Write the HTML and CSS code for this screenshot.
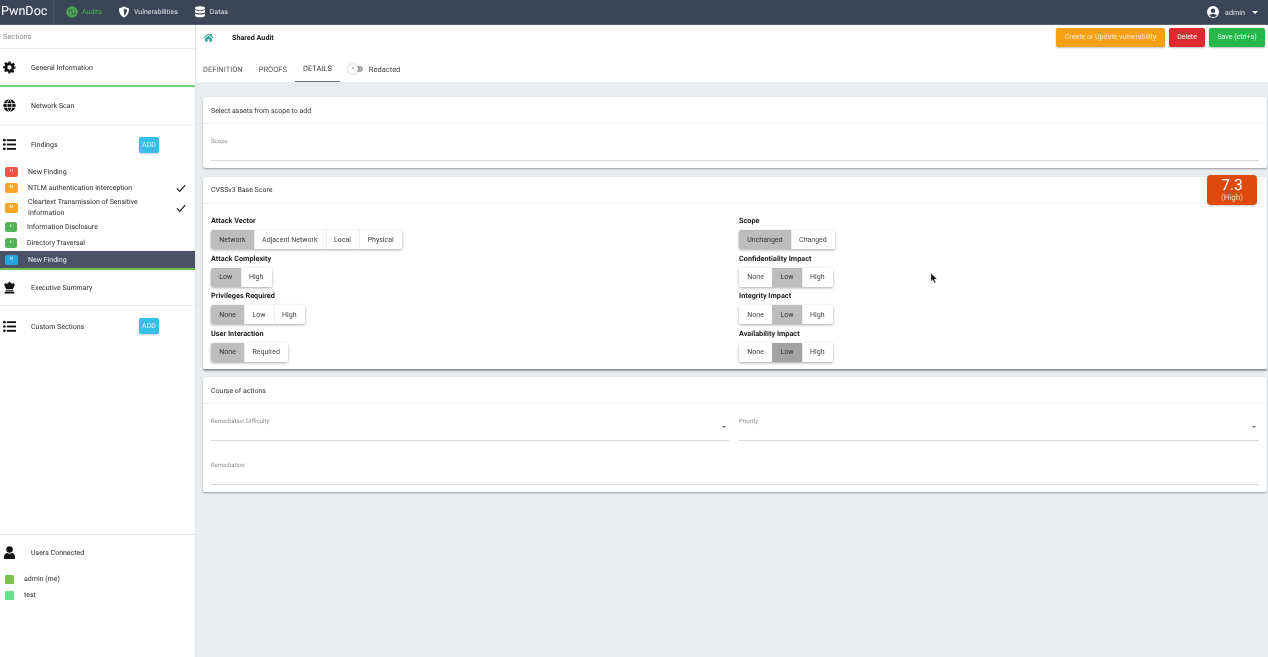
FILE: index.html
```html
<!DOCTYPE html>
<html lang="en">
<head>
<meta charset="utf-8">
<title>PwnDoc</title>
<link rel="stylesheet" href="styles.css">
</head>
<body>
<header class="topbar">
  <div class="brand">PwnDoc</div>
  <nav class="topnav">
    <a class="topnav-item active">
      <svg class="nav-icon" viewBox="0 0 24 24"><circle cx="12" cy="12" r="11.500" fill="#4caf50"/><path d="M12 3v19M7 5c-2 4-2 10 0 14M17 5c2 4 2 10 0 14M3 9c3 1 6 1 9 0M12 15c3 1 6 1 9-1" stroke="#3b4558" stroke-width="1.3" fill="none"/></svg>
      <span>Audits</span>
    </a>
    <a class="topnav-item">
      <svg class="nav-icon" viewBox="0 0 24 24"><path d="M12 1l10 4c0 8-3 15-10 18C5 20 2 13 2 5z" fill="#fff"/><path d="M12 5l6 2.400c0 5-2 9.500-6 11.600z" fill="#3b4558"/></svg>
      <span>Vulnerabilities</span>
    </a>
    <a class="topnav-item">
      <svg class="nav-icon" viewBox="0 0 24 24"><g fill="#fff"><ellipse cx="12" cy="4.500" rx="10" ry="3.800"/><path d="M2 7.500c2 3.500 18 3.500 20 0v4.500c-2 3.800-18 3.800-20 0z"/><path d="M2 14.500c2 3.500 18 3.500 20 0v5c-2 4-18 4-20 0z"/></g></svg>
      <span>Datas</span>
    </a>
  </nav>
  <div class="account">
    <svg class="account-icon" viewBox="0 0 24 24"><circle cx="12" cy="12" r="12" fill="#fff"/><circle cx="12" cy="9.500" r="4.500" fill="#3b4558"/><path d="M4.500 19c2-4 13-4 15 0-3.500 4-11.500 4-15 0z" fill="#3b4558"/></svg>
    <span>admin</span>
    <i class="caret"></i>
  </div>
</header>

<div class="app">
  <aside class="sidebar">
    <div class="side-title">Sections</div>

    <div class="side-row general">
      <svg class="side-icon" viewBox="0 0 24 24"><path fill="#111" fill-rule="evenodd" d="M10 1h4l.6 3.200 1.900.8 2.700-1.800 2.800 2.800-1.800 2.700.8 1.900L23 10v4l-3.200.6-.8 1.900 1.800 2.700-2.800 2.800-2.700-1.800-1.900.8L14 23h-4l-.6-3.200-1.900-.8-2.700 1.800-2.800-2.800 1.800-2.700-.8-1.900L0 14v-4l3.200-.6.8-1.900L2.200 4.800 5 2l2.700 1.800 1.900-.8zM12 8a4 4 0 100 8 4 4 0 000-8z"/></svg>
      <span>General Information</span>
    </div>
    <div class="side-row network">
      <svg class="side-icon" viewBox="0 0 24 24"><circle cx="12" cy="12" r="11.500" fill="#111"/><path d="M0 8.500h24M0 15.500h24M12 .5c-6 6-6 17 0 23M12 .5c6 6 6 17 0 23" stroke="#fff" stroke-width="1.500" fill="none"/></svg>
      <span>Network Scan</span>
    </div>
    <div class="side-row findings">
      <svg class="side-icon" viewBox="0 0 24 24"><g fill="#111"><circle cx="2.500" cy="4" r="2.500"/><circle cx="2.500" cy="12" r="2.500"/><circle cx="2.500" cy="20" r="2.500"/><rect x="7" y="2.300" width="17" height="3.400"/><rect x="7" y="10.300" width="17" height="3.400"/><rect x="7" y="18.300" width="17" height="3.400"/></g></svg>
      <span>Findings</span>
      <button class="add-btn">ADD</button>
    </div>

    <ul class="finding-list">
      <li class="finding f-a"><b class="sev sev-red">H</b><span>New Finding</span></li>
      <li class="finding f-b"><b class="sev sev-orange">M</b><span>NTLM authentication interception</span>
        <svg class="check" viewBox="0 0 24 24"><path d="M2 13l7 7L22 5" stroke="#222" stroke-width="3" fill="none"/></svg></li>
      <li class="finding f-c"><b class="sev sev-orange">M</b><span>Cleartext Transmission of Sensitive Information</span>
        <svg class="check" viewBox="0 0 24 24"><path d="M2 13l7 7L22 5" stroke="#222" stroke-width="3" fill="none"/></svg></li>
      <li class="finding f-d"><b class="sev sev-green">L</b><span>Information Disclosure</span></li>
      <li class="finding f-d"><b class="sev sev-green">L</b><span>Directory Traversal</span></li>
      <li class="finding selected"><b class="sev sev-blue">N</b><span>New Finding</span></li>
    </ul>

    <div class="side-row executive">
      <svg class="side-icon" viewBox="0 0 24 24"><path fill="#111" d="M12 1l1.500 2 2-.5-.5 2.500 5-1 2 3-4 8H6L2 7l2-3 5 1-.5-2.500 2 .5zM5 17h14v2H5zM3 20h18v3H3z"/></svg>
      <span>Executive Summary</span>
    </div>
    <div class="side-row custom">
      <svg class="side-icon" viewBox="0 0 24 24"><g fill="#111"><circle cx="2.500" cy="4" r="2.500"/><circle cx="2.500" cy="12" r="2.500"/><circle cx="2.500" cy="20" r="2.500"/><rect x="7" y="2.300" width="17" height="3.400"/><rect x="7" y="10.300" width="17" height="3.400"/><rect x="7" y="18.300" width="17" height="3.400"/></g></svg>
      <span>Custom Sections</span>
      <button class="add-btn">ADD</button>
    </div>

    <div class="users">
      <div class="side-row users-head">
        <svg class="side-icon" viewBox="0 0 24 24"><circle cx="12" cy="6.500" r="6" fill="#111"/><path d="M2 24v-5c0-4 4-6 6-6 2 1.500 6 1.500 8 0 2 0 6 2 6 6v5z" fill="#111"/></svg>
        <span>Users Connected</span>
      </div>
      <div class="user"><i class="dot dot-a"></i><span>admin (me)</span></div>
      <div class="user"><i class="dot dot-b"></i><span>test</span></div>
    </div>
  </aside>

  <main class="content">
    <div class="head">
      <div class="titlebar">
        <svg class="home" viewBox="0 0 24 24"><path fill="#26a69a" d="M12 3l4 3.400V4h3v5l4 3.500-1.500 1.500L12 6 2.500 14 1 12.500zM4.500 14.500L12 8.300l7.500 6.200V21h-5.500v-5h-4v5H4.500z"/></svg>
        <span class="audit-name">Shared Audit</span>
        <div class="actions">
          <button class="btn btn-orange">Create or Update vulnerability</button>
          <button class="btn btn-red">Delete</button>
          <button class="btn btn-green">Save (ctrl+s)</button>
        </div>
      </div>
      <div class="tabs">
        <a class="tab">DEFINITION</a>
        <a class="tab">PROOFS</a>
        <a class="tab current">DETAILS</a>
        <div class="toggle"><i class="track"></i><i class="thumb">×</i></div>
        <span class="toggle-label">Redacted</span>
      </div>
    </div>

    <section class="card card-scope">
      <h2 class="card-title">Select assets from scope to add</h2>
      <div class="card-body">
        <div class="field field-scope"><label>Scope</label></div>
      </div>
    </section>

    <section class="card card-cvss">
      <h2 class="card-title">CVSSv3 Base Score</h2>
      <div class="score"><strong>7.3</strong><small>(High)</small></div>
      <div class="cvss-grid">
        <div class="metric"><h3>Attack Vector</h3><div class="group"><button class="on">Network</button><button>Adjacent Network</button><button>Local</button><button>Physical</button></div></div>
        <div class="metric"><h3>Scope</h3><div class="group"><button class="on">Unchanged</button><button>Changed</button></div></div>
        <div class="metric"><h3>Attack Complexity</h3><div class="group"><button class="on">Low</button><button>High</button></div></div>
        <div class="metric"><h3>Confidentiality Impact</h3><div class="group"><button>None</button><button class="on">Low</button><button>High</button></div></div>
        <div class="metric"><h3>Privileges Required</h3><div class="group"><button class="on">None</button><button>Low</button><button>High</button></div></div>
        <div class="metric"><h3>Integrity Impact</h3><div class="group"><button>None</button><button class="on">Low</button><button>High</button></div></div>
        <div class="metric"><h3>User Interaction</h3><div class="group"><button class="on">None</button><button>Required</button></div></div>
        <div class="metric"><h3>Availability Impact</h3><div class="group"><button>None</button><button class="on hover">Low</button><button>High</button></div></div>
      </div>
    </section>

    <section class="card card-course">
      <h2 class="card-title">Course of actions</h2>
      <div class="card-body">
        <div class="two-col">
          <div class="field field-select"><label>Remediation Difficulty</label><i class="select-caret"></i></div>
          <div class="field field-select"><label>Priority</label><i class="select-caret"></i></div>
        </div>
        <div class="field field-rem"><label>Remediation</label></div>
      </div>
    </section>
  </main>
</div>
<svg class="cursor" viewBox="0 0 10 14"><path d="M1 0v11l2.600-2.400L5.500 13l1.800-.8-1.900-4.200H9z" fill="#111" stroke="#fff" stroke-width=".6"/></svg>
</body>
</html>
```
FILE: styles.css
```css
* { box-sizing: border-box; }
html, body { margin: 0; height: 100%; }
body {
  font-family: Roboto, "Liberation Sans", sans-serif;
  font-size: 7px;
  color: #2a2a2a;
  background: #e9edf0;
  overflow: hidden;
  position: relative;
  text-rendering: geometricPrecision;
}
.topbar, .app { filter: blur(.3px); will-change: transform; }
.topbar {
  height: 25px;
  background: #3b4558;
  border-bottom: 1px solid #596273;
  display: flex;
  align-items: center;
  color: #e8eaee;
}
.brand {
  width: 54px;
  height: 24px;
  line-height: 24px;
  padding-left: 1px;
  font-size: 12.6px;
  color: #fff;
  border-right: 1px solid #4a5467;
}
.topnav { display: flex; margin-left: 12px; }
.topnav-item { display: flex; align-items: center; gap: 4px; font-size: 7px; color: #dfe2e7; margin-right: 16px; }
.topnav-item.active { color: #4caf50; }
.nav-icon { width: 12px; height: 14px; }
.account { margin-left: auto; display: flex; align-items: center; padding-right: 10px; font-size: 7.200px; color: #dfe2e7; }
.account-icon { width: 12px; height: 12px; margin-right: 6px; }
.caret { margin-left: 7px; border: 3px solid transparent; border-top: 3px solid #fff; border-bottom: 0; }

.app { display: flex; height: 632px; }
.sidebar {
  width: 196px;
  flex: none;
  background: #fff;
  border-right: 1px solid #e2e5e8;
  display: flex;
  flex-direction: column;
}
.side-title { height: 24px; line-height: 23px; padding-left: 3px; color: #888; font-size: 7.400px; border-bottom: 1px solid #eee; }
.side-row { display: flex; align-items: center; font-size: 7px; padding-left: 3px; position: relative; }
.side-row span { padding-top: 1px; }
.side-icon { width: 13px; height: 13px; margin-right: 15px; flex: none; }
.general { height: 38px; border-bottom: 2px solid #71d17c; }
.network { height: 38px; border-bottom: 1px solid #eee; }
.findings { height: 39px; padding-bottom: 1px; }
.executive { height: 36px; border-bottom: 1px solid #eee; }
.custom { height: 40px; }
.add-btn {
  position: absolute;
  left: 139px;
  top: 50%;
  margin-top: -8px;
  width: 20px;
  height: 16px;
  padding: 0;
  border: 0;
  border-radius: 2px;
  background: #33c1e8;
  color: #d9f3fb;
  font: inherit;
  font-size: 7px;
  box-shadow: 0 1px 2px rgba(0,0,0,.2);
}
.finding-list { list-style: none; margin: 0; padding: 0; }
.finding { display: flex; align-items: center; height: 16px; font-size: 7px; position: relative; padding-left: 5px; }
.finding span { margin-left: 10px; }
.f-c { height: 23px; line-height: 10.500px; }
.f-c span { width: 125px; }
.f-d .sev { width: 12px; }
.f-d span { margin-left: 10px; }
.selected { background: #4a5366; color: #eef0f3; border-bottom: 2px solid #6cc24a; height: 19px; }
.sev {
  width: 13px;
  height: 10px;
  border-radius: 2px;
  flex: none;
  color: #fff;
  opacity: .95;
  font-size: 4.500px;
  font-weight: 400;
  text-align: center;
  line-height: 10px;
}
.sev-red { background: #ef4a3f; }
.sev-orange { background: #f9a11b; }
.sev-green { background: #4caf50; }
.sev-blue { background: #29a9e8; }
.check { position: absolute; left: 176px; top: 50%; margin-top: -5px; width: 10px; height: 10px; }
.users { margin-top: auto; border-top: 1px solid #e6e6e6; padding-bottom: 54px; }
.users-head { height: 35px; margin-bottom: 1px; }
.user { display: flex; align-items: center; height: 16px; padding-left: 5px; font-size: 7px; }
.dot { width: 9px; height: 9px; border-radius: 1px; margin-right: 10px; }
.dot-a { background: #7cc24e; }
.dot-b { background: #66e08a; }

.content { flex: 1; min-width: 0; display: flex; flex-direction: column; }
.head { background: #fff; height: 57px; margin-bottom: 15px; }
.titlebar { height: 24px; display: flex; align-items: center; padding-left: 7px; }
.home { width: 11px; height: 11px; margin-right: 18px; }
.audit-name { font-weight: 700; font-size: 7.200px; color: #222; }
.actions { margin-left: auto; display: flex; gap: 4px; padding-right: 3px; }
.btn {
  height: 19px;
  padding: 0;
  border: 0;
  border-radius: 2px;
  color: #f3e8d2;
  font: inherit;
  font-size: 7px;
  box-shadow: 0 1px 2px rgba(0,0,0,.25);
}
.btn-orange { width: 109px; background: #f9a012; }
.btn-red { width: 36px; background: #dc2a2f; color: #fff; }
.btn-green { width: 56px; background: #27b84a; color: #e8f8ec; }
.tabs { height: 26px; margin: 7px 0 0 -1px; display: flex; align-items: stretch; }
.tab { display: flex; align-items: center; padding: 0 8px; font-size: 7.500px; color: #555; }
.tab.current { color: #333; border-bottom: 1px solid #6b7280; }
.toggle { position: relative; width: 15px; margin-left: 8px; align-self: center; height: 8px; }
.track { position: absolute; left: 3px; right: 0; top: 1px; bottom: 1px; background: #aaa; border-radius: 3px; }
.thumb {
  position: absolute; left: 0; top: -1px; width: 10px; height: 10px; border-radius: 50%;
  background: #fff; box-shadow: 0 0 2px rgba(0,0,0,.4); font-style: normal; font-size: 6px; line-height: 10px; text-align: center; color: #999;
}
.toggle-label { align-self: center; margin-left: 6px; font-size: 7.500px; color: #444; }

.card {
  margin: 0 1px 0 7px;
  background: #fff;
  border-radius: 2px;
  box-shadow: 0 1px 2px rgba(0,0,0,.35);
  position: relative;
}
.card-title {
  margin: 0;
  height: 27px;
  line-height: 28px;
  padding-left: 8px;
  font-size: 7px;
  font-weight: 400;
  color: #333;
  border-bottom: 1px solid #f0f0f0;
}
.card-cvss .card-title { line-height: 26px; }
.card-body { padding: 0 8px; }
.card-scope { height: 71px; margin-bottom: 9px; }
.card-cvss { height: 193px; margin-bottom: 7px; border-bottom: 1px solid #8a8f96; }
.card-course { height: 115px; }
.field { position: relative; border-bottom: 1px solid #d5d8dc; }
.field label { display: block; font-size: 6px; color: #8a8a8a; }
.field-scope { height: 37px; padding-top: 14px; }
.two-col { display: grid; grid-template-columns: 518px 1fr; gap: 10px; }
.field-select { height: 37px; padding-top: 14px; }
.field-rem { height: 44px; padding-top: 21px; }
.select-caret { position: absolute; right: 3px; top: 22px; border: 2.500px solid transparent; border-top: 2.500px solid #666; border-bottom: 0; }
.score {
  position: absolute;
  right: 10px;
  top: -2px;
  width: 50px;
  height: 30px;
  background: #dd4a0b;
  border-radius: 4px;
  color: #fff;
  text-align: center;
  display: flex;
  flex-direction: column;
  align-items: center;
  line-height: 1;
  padding-top: 3px;
  box-shadow: 0 1px 2px rgba(0,0,0,.2);
}
.score strong { font-weight: 400; font-size: 15.500px; line-height: 15px; }
.score small { font-size: 8px; line-height: 9px; color: #f6d4c4; }
.cvss-grid { display: grid; grid-template-columns: 518px 1fr; column-gap: 10px; padding: 12px 8px 0; grid-auto-rows: 37.500px; }
.metric h3 { margin: 0 0 5px; font-size: 7.300px; line-height: 9px; font-weight: 700; color: #222; }
.group { display: inline-flex; height: 19px; border-radius: 2px; box-shadow: 0 1px 3px rgba(0,0,0,.35); }
.group button {
  border: 0;
  box-shadow: inset 1px 0 #eee;
  background: #fff;
  height: 19px;
  padding: 0 8.300px;
  font: inherit;
  font-size: 7px;
  color: #444;
}
.group button:first-child { box-shadow: none; border-radius: 2px 0 0 2px; }
.group button:last-child { border-radius: 0 2px 2px 0; }
.group button.on { background: #bdbdbd; color: #333; box-shadow: none; }
.group button.on.hover { background: #a3a3a3; }
.cursor { position: absolute; left: 930px; top: 273px; width: 8px; height: 11px; }
```
